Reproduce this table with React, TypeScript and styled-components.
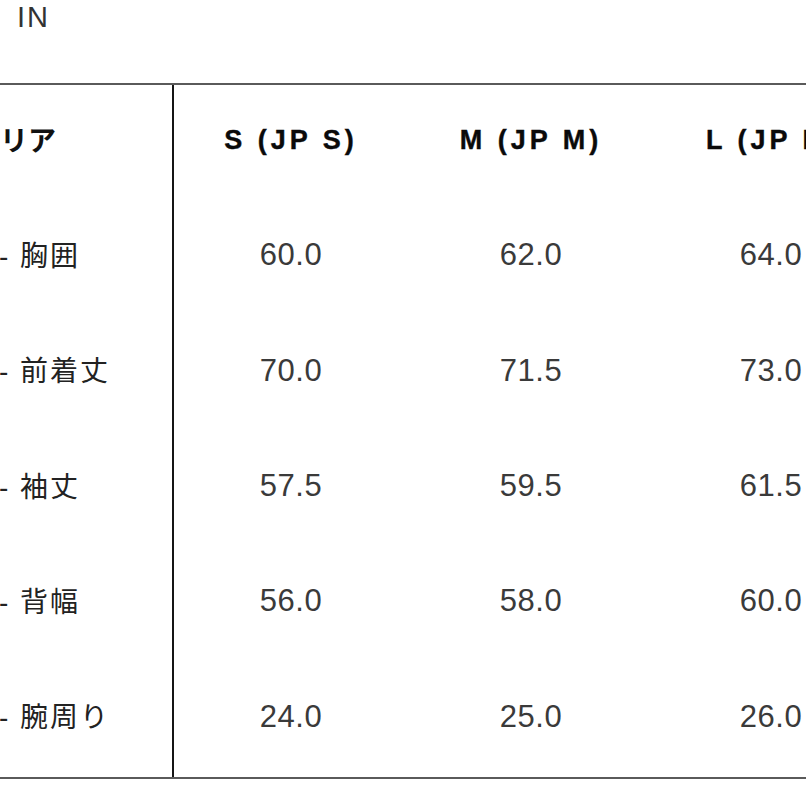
import React from 'react';
import styled, { createGlobalStyle } from 'styled-components';

const GlobalStyle = createGlobalStyle`
    html, body {
        margin: 0;
        padding: 0;
        background: #ffffff;
        overflow: hidden;
    }
`;

const sizes = ['S (JP S)', 'M (JP M)', 'L (JP L)'];

const rows = [
    { label: '胸囲', values: ['60.0', '62.0', '64.0'] },
    { label: '前着丈', values: ['70.0', '71.5', '73.0'] },
    { label: '袖丈', values: ['57.5', '59.5', '61.5'] },
    { label: '背幅', values: ['56.0', '58.0', '60.0'] },
    { label: '腕周り', values: ['24.0', '25.0', '26.0'] },
];

export default function App() {
    return (
        <Page>
            <GlobalStyle />
            <Unit>IN</Unit>
            <Table>
                <LabelCell>
                    <HeaderLabel>エリア</HeaderLabel>
                </LabelCell>
                {sizes.map(size => (
                    <Cell key={size}>
                        <SizeHead>{size}</SizeHead>
                    </Cell>
                ))}
                {rows.map(row => (
                    <React.Fragment key={row.label}>
                        <LabelCell>
                            <RowLabel>- {row.label}</RowLabel>
                        </LabelCell>
                        {row.values.map((v, i) => (
                            <Cell key={i}>
                                <Value>{v}</Value>
                            </Cell>
                        ))}
                    </React.Fragment>
                ))}
            </Table>
        </Page>
    );
}

const Page = styled.div`
    width: 806px;
    height: 806px;
    overflow: hidden;
    background: #ffffff;
`;

const Unit = styled.div`
    height: 83px;
    box-sizing: border-box;
    padding: 1px 0 0 17px;
    font-family: "Liberation Sans", Arial, sans-serif;
    font-size: 29px;
    letter-spacing: 2px;
    color: #333333;
`;

const Table = styled.div`
    display: grid;
    grid-template-columns: 174px repeat(3, 240px);
    grid-template-rows: repeat(6, 1fr);
    height: 692px;
    border-top: 2px solid #5a5a5a;
    border-bottom: 2px solid #5a5a5a;
`;

const LabelCell = styled.div`
    display: flex;
    align-items: center;
    padding-bottom: 8px;
    border-right: 2px solid #151515;
    white-space: nowrap;
`;

const Cell = styled.div`
    display: flex;
    align-items: center;
    justify-content: center;
    padding: 0 6px 5px 0;
    white-space: nowrap;
`;

const HeaderLabel = styled.span`
    margin-left: -28px;
    font-family: "Noto Sans CJK JP", sans-serif;
    font-weight: 700;
    font-size: 28px;
    color: #111111;
`;

const SizeHead = styled.span`
    font-family: "Liberation Sans", Arial, sans-serif;
    font-weight: 700;
    font-size: 27px;
    letter-spacing: 4px;
    color: #0a0a0a;
    -webkit-text-stroke: 0.4px #0a0a0a;
`;

const RowLabel = styled.span`
    margin-left: -1px;
    font-family: "Liberation Sans", "Noto Sans CJK JP", sans-serif;
    font-size: 28px;
    letter-spacing: 2px;
    color: #222222;
`;

const Value = styled.span`
    font-family: "Liberation Sans", Arial, sans-serif;
    font-size: 31px;
    letter-spacing: 0.5px;
    color: #3a3a3a;
`;
